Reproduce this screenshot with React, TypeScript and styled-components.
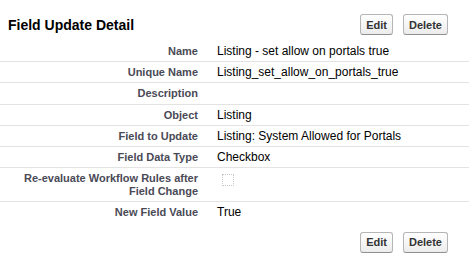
import React from "react";
import styled, { createGlobalStyle } from "styled-components";

interface IField {
  label: string;
  value?: string;
  checkbox?: boolean;
}

const fields: IField[] = [
  { label: "Name", value: "Listing - set allow on portals true" },
  { label: "Unique Name", value: "Listing_set_allow_on_portals_true" },
  { label: "Description", value: "" },
  { label: "Object", value: "Listing" },
  { label: "Field to Update", value: "Listing: System Allowed for Portals" },
  { label: "Field Data Type", value: "Checkbox" },
  { label: "Re-evaluate Workflow Rules after Field Change", checkbox: true },
  { label: "New Field Value", value: "True" },
];

const Buttons: React.FC = () => (
  <ButtonGroup>
    <Button>Edit</Button>
    <Button>Delete</Button>
  </ButtonGroup>
);

const App: React.FC = () => {
  return (
    <>
      <GlobalStyle />
      <Wrapper>
        <Header>
          <Title>Field Update Detail</Title>
          <Buttons />
        </Header>

        <DetailList>
          {fields.map((field, i) => (
            <Row key={field.label} last={i === fields.length - 1}>
              <Label>{field.label}</Label>
              <Value>
                {field.checkbox ? <Checkbox /> : field.value}
              </Value>
            </Row>
          ))}
        </DetailList>

        <Footer>
          <Buttons />
        </Footer>
      </Wrapper>
    </>
  );
};

const GlobalStyle = createGlobalStyle`
  body {
    margin: 0;
    background: #fff;
    font-family: "Liberation Sans", Arial, sans-serif;
  }
`;

const Wrapper = styled.div`
  width: 469px;
  height: 277px;
  background: #fff;
  overflow: hidden;
`;

const Header = styled.div`
  display: flex;
  align-items: center;
  justify-content: space-between;
  padding: 14px 21px 0 8px;
  margin-bottom: 6px;
`;

const Title = styled.h2`
  margin: 0;
  font-size: 14px;
  font-weight: bold;
  color: #000;
`;

const ButtonGroup = styled.div`
  display: flex;
  gap: 10px;
`;

const Button = styled.button`
  height: 21px;
  padding: 0 5px;
  font-family: "Liberation Sans", Arial, sans-serif;
  font-size: 11px;
  font-weight: bold;
  color: #333;
  background: linear-gradient(#ffffff, #ececec);
  border: 1px solid #b5b5b5;
  border-bottom-color: #8f8f8f;
  border-radius: 3px;
`;

const DetailList = styled.div`
  display: flex;
  flex-direction: column;
`;

const Row = styled.div<{ last: boolean }>`
  display: grid;
  grid-template-columns: 208px 1fr;
  padding: 4px 0 3.2px;
  border-bottom: 1px solid ${(props) => (props.last ? "transparent" : "#e3e3e3")};
`;

const Label = styled.div`
  padding: 0 10px 0 2px;
  text-align: right;
  font-size: 11px;
  font-weight: bold;
  line-height: 13px;
  color: #4a4a56;
`;

const Value = styled.div`
  padding-left: 9px;
  font-size: 12px;
  line-height: 13px;
  color: #000;
`;

const Checkbox = styled.span`
  display: block;
  width: 10px;
  height: 10px;
  margin: 2px 0 0 5px;
  border: 1px dotted #c8c8c8;
`;

const Footer = styled.div`
  display: flex;
  justify-content: flex-end;
  padding: 8px 21px 0 0;
`;

export default App;
